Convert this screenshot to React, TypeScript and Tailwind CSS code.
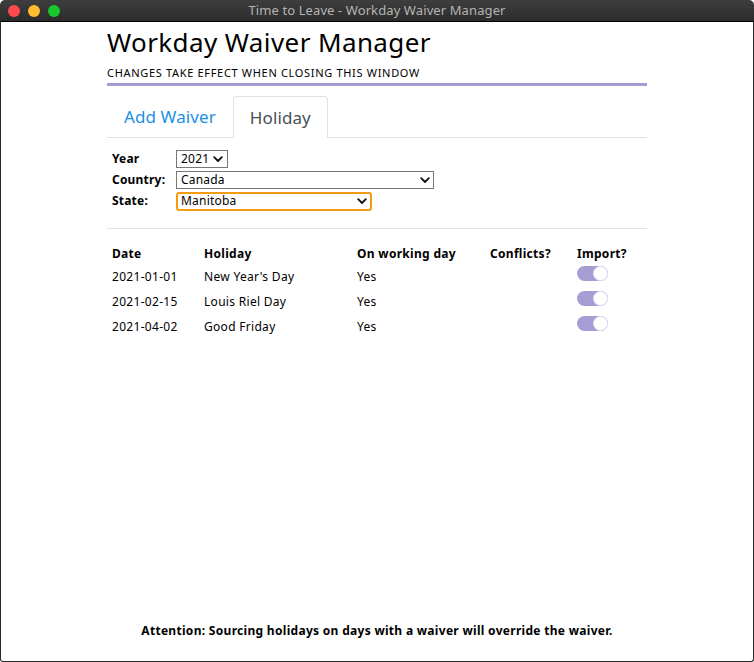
import { useState } from "react";

interface Holiday {
    date: string,
    name: string,
    working: string,
    conflicts: string,
    imported: boolean
}

const holidays: Holiday[] = [
    { date: "2021-01-01", name: "New Year's Day", working: "Yes", conflicts: "", imported: true },
    { date: "2021-02-15", name: "Louis Riel Day", working: "Yes", conflicts: "", imported: true },
    { date: "2021-04-02", name: "Good Friday", working: "Yes", conflicts: "", imported: true },
]

const font = { fontFamily: "'Noto Sans', 'Open Sans', sans-serif" }

const Chevron = () => (
    <svg width="10" height="7" viewBox="0 0 10 7" className="pointer-events-none">
        <path d="M1.2 1.2 L5 5 L8.8 1.2" fill="none" stroke="#111" strokeWidth="1.8" strokeLinecap="round" strokeLinejoin="round" />
    </svg>
)

const Toggle = ({ on, onClick }: { on: boolean, onClick: () => void }) => (
    <button onClick={onClick} className={`relative w-[31px] h-[15px] rounded-full ${on ? "bg-[#a69dd5]" : "bg-[#d5d5d5]"}`}>
        <span className={`absolute top-0 h-[15px] w-[15px] rounded-full bg-white border border-[#e6e3f4] ${on ? "right-0" : "left-0"}`}></span>
    </button>
)

const App = () => {
    const [imports, setImports] = useState<boolean[]>(holidays.map(h => h.imported))

    return (
        <div className="w-[754px] h-[662px] bg-white flex flex-col text-black" style={font}>
            {/* title bar */}
            <div className="h-[22px] rounded-t-[5px] bg-gradient-to-b from-[#3e3e3e] to-[#2c2c2c] flex items-center relative border-b border-black">
                <div className="flex gap-[8px] pl-[8px]">
                    <span className="w-[12px] h-[12px] rounded-full bg-[#fe4a4f]"></span>
                    <span className="w-[12px] h-[12px] rounded-full bg-[#febd2e]"></span>
                    <span className="w-[12px] h-[12px] rounded-full bg-[#19c72f]"></span>
                </div>
                <div className="absolute inset-0 flex items-center justify-center text-[13px] text-[#b4b4b4] tracking-[0.1px]">
                    Time to Leave - Workday Waiver Manager
                </div>
            </div>

            <div className="flex-1 flex flex-col border-x border-b border-[#2a2a2a] rounded-b-[3px]">
                <div className="w-[540px] mx-auto">
                    <h1 className="text-[26px] leading-[30px] mt-[5px] tracking-[0.4px]">Workday Waiver Manager</h1>
                    <p className="text-[11px] leading-[14px] mt-[9px] uppercase tracking-[0.68px]">Changes take effect when closing this window</p>
                    <div className="h-[3px] bg-[#a59cd3] mt-[3px]"></div>

                    {/* tabs */}
                    <div className="flex mt-[10px] border-b border-[#dee2e6] h-[42px] tracking-[0.1px]">
                        <div className="px-[17px] text-[17px] text-[#1b8fe6] flex items-center">Add Waiver</div>
                        <div className="px-[16px] text-[17px] text-[#495057] flex items-center border border-b-0 border-[#dee2e6] rounded-t-[4px] bg-white -mb-px">Holiday</div>
                    </div>

                    {/* form */}
                    <div className="mt-[12px] pl-[5px] flex flex-col gap-[3px] text-[12px] tracking-[0.2px]">
                        <div className="flex items-center h-[18px]">
                            <label className="w-[64px] font-bold">Year</label>
                            <div className="relative w-[52px] h-[18px] border border-[#777] flex items-center justify-between pl-[4px] pr-[4px] text-[12px]">
                                <span>2021</span>
                                <Chevron />
                            </div>
                        </div>
                        <div className="flex items-center h-[18px]">
                            <label className="w-[64px] font-bold">Country:</label>
                            <div className="w-[258px] h-[18px] border border-[#777] flex items-center justify-between pl-[4px] pr-[3px] text-[12px]">
                                <span>Canada</span>
                                <Chevron />
                            </div>
                        </div>
                        <div className="flex items-center h-[18px]">
                            <label className="w-[64px] font-bold">State:</label>
                            <div className="w-[196px] h-[19px] border-2 border-[#f39c12] rounded-[3px] flex items-center justify-between pl-[3px] pr-[3px] text-[12px]">
                                <span>Manitoba</span>
                                <Chevron />
                            </div>
                        </div>
                    </div>

                    <div className="h-px bg-[#e2e2e2] mt-[18px]"></div>

                    {/* holidays table */}
                    <table className="mt-[15px] text-[12px] text-left border-collapse tracking-[0.3px]">
                        <thead>
                            <tr className="h-[20px]">
                                <th className="w-[92px] pl-[5px] font-bold">Date</th>
                                <th className="w-[153px] pl-[5px] font-bold">Holiday</th>
                                <th className="w-[133px] pl-[5px] font-bold">On working day</th>
                                <th className="w-[87px] pl-[5px] font-bold">Conflicts?</th>
                                <th className="pl-[5px] font-bold">Import?</th>
                            </tr>
                        </thead>
                        <tbody>
                            {holidays.map((h, i) => (
                                <tr key={h.date} className="h-[25px]">
                                    <td className="pl-[5px]">{h.date}</td>
                                    <td className="pl-[5px]">{h.name}</td>
                                    <td className="pl-[5px]">{h.working}</td>
                                    <td className="pl-[5px]">{h.conflicts}</td>
                                    <td className="pl-[5px] align-top pt-[2px]">
                                        <Toggle on={imports[i]} onClick={() => setImports(imports.map((v, j) => j === i ? !v : v))} />
                                    </td>
                                </tr>
                            ))}
                        </tbody>
                    </table>
                </div>

                <p className="mt-auto mb-[21px] text-center text-[12px] font-bold tracking-[0.3px]">
                    Attention: Sourcing holidays on days with a waiver will override the waiver.
                </p>
            </div>
        </div>
    );
}
export default App
